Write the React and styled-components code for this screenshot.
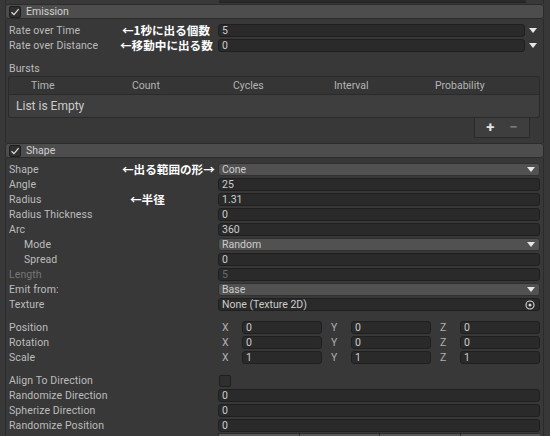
import React from "react";
import styled, { createGlobalStyle } from "styled-components";

const GlobalStyle = createGlobalStyle`
  body {
    margin: 0;
    background: #383838;
    font-family: Roboto, "Noto Sans", sans-serif;
    font-size: 10.5px;
    color: #bcbcbc;
  }
`;

const Page = styled.div`
  width: 550px;
  height: 436px;
  overflow: hidden;
  padding-left: 5px;
  box-sizing: border-box;
`;

const TopStrip = styled.div`
  height: 4px;
  display: grid;
  grid-template-columns: 213px 307px;
  border-left: 1px solid #2b2b2b;
  border-right: 1px solid #2b2b2b;
  width: 537px;
  box-sizing: content-box;
  div {
    height: 2px;
    background: #2a2a2a;
    border-bottom: 1px solid #222;
  }
`;

const Module = styled.section`
  width: 539px;
`;

const Header = styled.div`
  height: 15px;
  box-sizing: border-box;
  background: #4d4d4d;
  border: 1px solid #2b2b2b;
  border-radius: 3px;
  display: flex;
  align-items: center;
  gap: 5px;
  padding-left: 2px;
  color: #d0d0d0;
  font-size: 10.5px;
`;

const Check = styled.span`
  width: 12px;
  height: 12px;
  box-sizing: border-box;
  border-radius: 2px;
  background: #2f2f2f;
  border: 1px solid #1e1e1e;
  display: inline-flex;
  align-items: center;
  justify-content: center;
  margin-left: ${(p) => p.$ml || 0}px;
`;

const Body = styled.div`
  border-left: 1px solid #2b2b2b;
  border-right: 1px solid #2b2b2b;
  padding: 4px 3px ${(p) => p.$pb || 0}px 3px;
`;

const Row = styled.div`
  position: relative;
  height: 15px;
  display: grid;
  grid-template-columns: 209px 1fr;
  align-items: center;
  margin-top: ${(p) => p.$mt || 0}px;
`;

const Label = styled.span`
  padding-left: ${(p) => p.$indent || 0}px;
  color: ${(p) => (p.$dim ? "#767676" : "#bcbcbc")};
  white-space: nowrap;
  letter-spacing: 0.1px;
`;

const Note = styled.span`
  position: absolute;
  left: ${(p) => p.$left}px;
  top: 0;
  height: 15px;
  line-height: 15px;
  font-family: "Noto Sans CJK JP", sans-serif;
  font-weight: 700;
  font-size: 11.6px;
  color: #ffffff;
  white-space: nowrap;
  overflow: hidden;
`;

const Field = styled.div`
  height: 13px;
  box-sizing: border-box;
  background: ${(p) => (p.$popup ? "#515151" : "#2a2a2a")};
  border: 1px solid ${(p) => (p.$popup ? "#303030" : "#1f1f1f")};
  border-radius: 3px;
  display: flex;
  align-items: center;
  justify-content: space-between;
  padding: 0 4px 0 3px;
  color: ${(p) => (p.$dim ? "#6a6a6a" : "#cccccc")};
  font-size: 10.5px;
  flex: 1;
  min-width: 0;
`;

const CurveCell = styled.div`
  display: flex;
  align-items: center;
`;

const ArrowBox = styled.div`
  width: 15px;
  display: flex;
  justify-content: center;
`;

const Tri = styled.span`
  width: 0;
  height: 0;
  border-left: 4px solid transparent;
  border-right: 4px solid transparent;
  border-top: 5px solid #e6e6e6;
`;

const VecGrid = styled.div`
  display: grid;
  grid-template-columns: repeat(3, 1fr);
  gap: 5px;
`;

const VecItem = styled.div`
  display: grid;
  grid-template-columns: 24px 1fr;
  align-items: center;
  span {
    padding-left: 4px;
    color: #b0b0b0;
  }
`;

const BurstsTable = styled.div`
  margin-left: -1px;
  width: 532px;
`;

const TableHead = styled.div`
  height: 19px;
  box-sizing: border-box;
  background: #353535;
  border: 1px solid #2a2a2a;
  border-radius: 3px 3px 0 0;
  display: grid;
  grid-template-columns: repeat(5, 101px);
  padding-left: 22px;
  align-items: center;
  color: #b4b4b4;
`;

const TableBody = styled.div`
  height: 23px;
  box-sizing: border-box;
  background: #3e3e3e;
  border: 1px solid #2a2a2a;
  border-top: none;
  border-radius: 0 0 3px 3px;
  display: flex;
  align-items: center;
  padding-left: 7px;
  font-size: 12px;
  color: #cccccc;
`;

const Footer = styled.div`
  width: 56px;
  height: 20px;
  box-sizing: border-box;
  margin-left: 466px;
  background: #3e3e3e;
  border: 1px solid #2a2a2a;
  border-top: none;
  display: flex;
  align-items: center;
  justify-content: space-around;
  padding: 0 4px;
`;

const FootBtn = styled.span`
  font-size: 15px;
  font-weight: 700;
  line-height: 15px;
  color: ${(p) => (p.$off ? "#7a7a7a" : "#e4e4e4")};
`;

const Spacer = styled.div`
  height: ${(p) => p.$h}px;
`;

const ButtonBar = styled.div`
  display: grid;
  grid-template-columns: 209px repeat(4, 1fr);
  height: 15px;
  div {
    background: #585858;
    border-left: 1px solid #2a2a2a;
    border-top: 1px solid #2a2a2a;
  }
  div:first-child {
    background: transparent;
    border: none;
  }
`;

const CheckMark = () => (
  <svg width="10" height="10" viewBox="0 0 10 10">
    <polyline
      points="1.5,5.2 4,7.6 8.6,2.2"
      fill="none"
      stroke="#e0e0e0"
      strokeWidth="1.2"
    />
  </svg>
);

const Target = () => (
  <svg width="10" height="10" viewBox="0 0 10 10">
    <circle cx="5" cy="5" r="4" fill="none" stroke="#d8d8d8" strokeWidth="1.1" />
    <circle cx="5" cy="5" r="1.5" fill="#d8d8d8" />
  </svg>
);

const ModuleTitle = ({ title }) => (
  <Header>
    <Check $ml={1}>
      <CheckMark />
    </Check>
    {title}
  </Header>
);

const ValueRow = ({ label, value, indent, dim, popup, note, noteLeft, mt }) => (
  <Row $mt={mt}>
    <Label $indent={indent} $dim={dim}>
      {label}
    </Label>
    {note && <Note $left={noteLeft}>{note}</Note>}
    <Field $popup={popup} $dim={dim}>
      <span>{value}</span>
      {popup && <Tri />}
    </Field>
  </Row>
);

const CurveRow = ({ label, value, note, noteLeft }) => (
  <Row>
    <Label>{label}</Label>
    <Note $left={noteLeft}>{note}</Note>
    <CurveCell>
      <Field>{value}</Field>
      <ArrowBox>
        <Tri />
      </ArrowBox>
    </CurveCell>
  </Row>
);

const VectorRow = ({ label, values }) => (
  <Row>
    <Label>{label}</Label>
    <VecGrid>
      {["X", "Y", "Z"].map((axis, i) => (
        <VecItem key={axis}>
          <span>{axis}</span>
          <Field>{values[i]}</Field>
        </VecItem>
      ))}
    </VecGrid>
  </Row>
);

export default function App() {
  return (
    <Page>
      <GlobalStyle />
      <TopStrip>
        <span />
        <div />
      </TopStrip>
      <Module>
        <ModuleTitle title="Emission" />
        <Body $pb={5}>
          <CurveRow label="Rate over Time" value="5" note="←1秒に出る個数" noteLeft={113} />
          <CurveRow label="Rate over Distance" value="0" note="←移動中に出る数" noteLeft={111} />
          <Row $mt={8}>
            <Label>Bursts</Label>
          </Row>
          <BurstsTable>
            <TableHead>
              <span>Time</span>
              <span>Count</span>
              <span>Cycles</span>
              <span>Interval</span>
              <span>Probability</span>
            </TableHead>
            <TableBody>List is Empty</TableBody>
            <Footer>
              <FootBtn>+</FootBtn>
              <FootBtn $off>−</FootBtn>
            </Footer>
          </BurstsTable>
        </Body>
      </Module>
      <Module>
        <ModuleTitle title="Shape" />
        <Body>
          <ValueRow label="Shape" value="Cone" popup note="←出る範囲の形→" noteLeft={113} />
          <ValueRow label="Angle" value="25" />
          <ValueRow label="Radius" value="1.31" note="←半径" noteLeft={121} />
          <ValueRow label="Radius Thickness" value="0" />
          <ValueRow label="Arc" value="360" />
          <ValueRow label="Mode" value="Random" popup indent={15} />
          <ValueRow label="Spread" value="0" indent={15} />
          <ValueRow label="Length" value="5" dim />
          <ValueRow label="Emit from:" value="Base" popup />
          <Row>
            <Label>Texture</Label>
            <Field>
              <span>None (Texture 2D)</span>
              <Target />
            </Field>
          </Row>
          <Spacer $h={8} />
          <VectorRow label="Position" values={["0", "0", "0"]} />
          <VectorRow label="Rotation" values={["0", "0", "0"]} />
          <VectorRow label="Scale" values={["1", "1", "1"]} />
          <Spacer $h={8} />
          <Row>
            <Label>Align To Direction</Label>
            <Check $ml={1} />
          </Row>
          <ValueRow label="Randomize Direction" value="0" />
          <ValueRow label="Spherize Direction" value="0" />
          <ValueRow label="Randomize Position" value="0" />
          <ButtonBar>
            <div />
            <div />
            <div />
            <div />
            <div />
          </ButtonBar>
        </Body>
      </Module>
    </Page>
  );
}
